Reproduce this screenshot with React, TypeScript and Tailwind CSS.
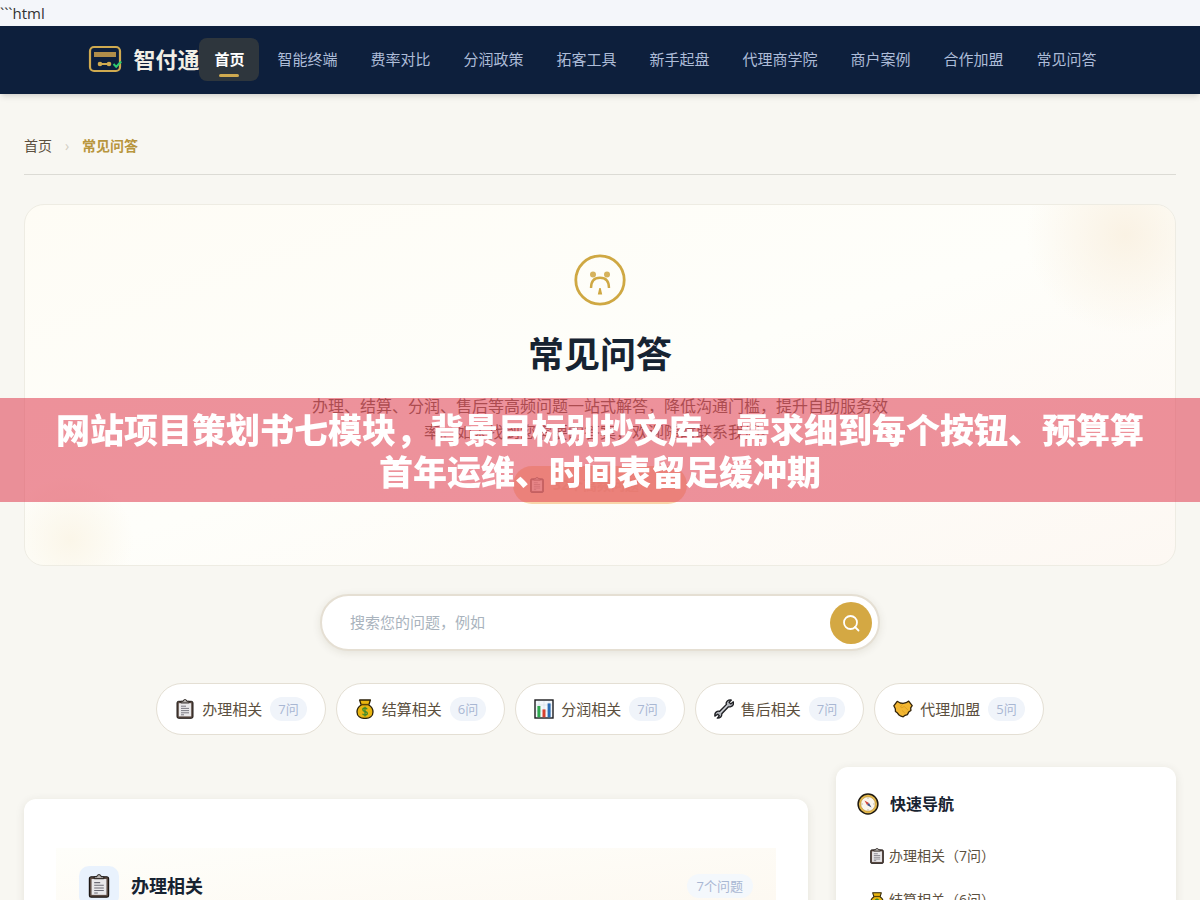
import type { ReactElement } from "react";

type IconProps = { className?: string };

function ClipboardIcon({ className }: IconProps) {
  return (
    <svg viewBox="0 0 20 20" className={className} aria-hidden="true">
      <rect x="2" y="2.3" width="16" height="17" rx="1.6" fill="#5b4a42" stroke="#1c1714" strokeWidth="1" />
      <rect x="3.8" y="4.2" width="12.4" height="13.2" fill="#e9e8ea" />
      <path d="M6 3.9V2.3h2.2a1.8 1.8 0 0 1 3.6 0H14v1.6z" fill="#b5b1ae" stroke="#1c1714" strokeWidth="0.8" />
      <path d="M6 7.2h5M6 9.4h8M6 11.6h8M6 13.8h8M6 15.8h3" stroke="#6c6b75" strokeWidth="0.9" />
    </svg>
  );
}

function MoneyIcon({ className }: IconProps) {
  return (
    <svg viewBox="0 0 20 20" className={className} aria-hidden="true">
      <path
        d="M4.6 1h10.8l-1.6 5C17 8 18 10.3 18 13c0 4-3.3 6.4-8 6.4S2 17 2 13c0-2.700 1-5 4.200-7z"
        fill="#e9b510"
        stroke="#2b2108"
        strokeWidth="1.3"
        strokeLinejoin="round"
      />
      <path d="M6 5.6h8" stroke="#5c4306" strokeWidth="1.5" />
      <path
        d="M12.2 10.2c-.5-.9-1.3-1.2-2.2-1.2-1.3 0-2.2.6-2.2 1.7 0 2.4 4.6 1.2 4.6 3.6 0 1.1-1 1.8-2.4 1.8-1.1 0-2-.4-2.5-1.3M10 7.8v9.6"
        fill="none"
        stroke="#3f8a2c"
        strokeWidth="1.3"
      />
    </svg>
  );
}

function ChartIcon({ className }: IconProps) {
  return (
    <svg viewBox="0 0 20 20" className={className} aria-hidden="true">
      <rect x="1" y="1" width="18" height="18" fill="#f3f7fb" stroke="#1b1b1f" strokeWidth="1.4" />
      <path d="M5 2v16M10 2v16M15 2v16M2 6h16M2 12h16" stroke="#d5dde6" strokeWidth="0.6" />
      <rect x="3.4" y="7" width="3" height="11.3" fill="#2fa84f" />
      <rect x="8.5" y="10.4" width="3" height="7.9" fill="#d8402f" />
      <rect x="13.6" y="4.4" width="3" height="13.9" fill="#2b6cb5" />
    </svg>
  );
}

function WrenchIcon({ className }: IconProps) {
  return (
    <svg viewBox="0 0 20 20" className={className} aria-hidden="true">
      <path
        d="M12.4 3.2C13.4 1.3 15.800.5 17.400 1l-2.300 2.300 1.600 1.600L19.300 2.800c.5 2.200-.6 4.300-2.400 4.900-.9.3-1.700.3-2.400.1l-6.700 6.900c.3 2.500-1.600 4.600-4.500 4.500l2-2.400-1.600-1.600-2.800 1.900c-.3-2.200.6-4 2.300-4.700.8-.3 1.700-.4 2.500-.1l6.700-6.900c-.3-.7-.3-1.500 0-2.200z"
        fill="#b4b7bd"
        stroke="#1d1e22"
        strokeWidth="1.3"
        strokeLinejoin="round"
      />
      <path d="m6.500 13.500 7-7" stroke="#dcdee2" strokeWidth="0.8" />
    </svg>
  );
}

function HandshakeIcon({ className }: IconProps) {
  return (
    <svg viewBox="0 0 20 20" className={className} aria-hidden="true">
      <path
        d="M.8 6.800 4.200 2.300l3 1.700 2.900.4L13 3.700l2.700-1.600 3.500 4.500-1.500 2.200.2 2.600-2.200 1.700-1.300 2.500-2.300.7-1.900 1.500-2.200-.6-2-1.200-1.500-1.900-2-1.500-.2-2.800z"
        fill="#f2b632"
        stroke="#33240a"
        strokeWidth="1.3"
        strokeLinejoin="round"
      />
      <path d="M9.800 5 7.400 8l1.500.8 2.300-1.400 4 3.800M9 11.400l2.800 2.600" fill="none" stroke="#d99a1b" strokeWidth="0.7" />
    </svg>
  );
}

function CompassIcon({ className }: IconProps) {
  return (
    <svg viewBox="0 0 22 22" className={className} aria-hidden="true">
      <circle cx="11" cy="11" r="9.9" fill="#e3b84c" stroke="#1f1a12" strokeWidth="1.5" />
      <circle cx="11" cy="11" r="7.3" fill="#faf6ee" stroke="#b88a2c" strokeWidth="0.6" />
      <path d="M11 4.4v1.4M11 16.2v1.4M4.4 11h1.4M16.2 11h1.4" stroke="#b3a98f" strokeWidth="0.9" />
      <path d="m7.500 7.500 4.500 2.500-2 2z" fill="#d3403a" />
      <path d="m14.500 14.500-4.500-2.500 2-2z" fill="#3d4f86" />
    </svg>
  );
}

function LogoIcon({ className }: IconProps) {
  return (
    <svg viewBox="0 0 34 28" fill="none" className={className} aria-hidden="true">
      <rect x="2" y="2" width="30" height="24" rx="4" stroke="#cfaa50" strokeWidth="2.2" />
      <rect x="6" y="7" width="22" height="5" fill="#b08d4a" />
      <path d="M12 19h9" stroke="#cfaa50" strokeWidth="2" />
      <circle cx="12" cy="19" r="2.3" fill="#cfaa50" />
      <circle cx="21" cy="19" r="2.3" fill="#cfaa50" />
      <path d="m25.5 19 2.700 2.700 5-5.200" stroke="#2ecc71" strokeWidth="2" />
    </svg>
  );
}

function FaceIcon({ className }: IconProps) {
  return (
    <svg viewBox="0 0 52 52" fill="none" className={className} aria-hidden="true">
      <circle cx="26" cy="26" r="24.2" stroke="#cfa843" strokeWidth="2.8" />
      <circle cx="19" cy="20.600" r="3" fill="#d6b25c" />
      <circle cx="33" cy="20.600" r="3" fill="#d6b25c" />
      <path d="M17 34c0-7 3.500-10.300 9-10.300s9 3.300 9 10.300" stroke="#cfa843" strokeWidth="2.4" />
      <path d="M25.300 34h1.400l1.500 6.600h-4.400z" fill="#cfa843" />
    </svg>
  );
}

const navItems = [
  "首页",
  "智能终端",
  "费率对比",
  "分润政策",
  "拓客工具",
  "新手起盘",
  "代理商学院",
  "商户案例",
  "合作加盟",
  "常见问答",
];

const categories: { name: string; count: number; Icon: (props: IconProps) => ReactElement }[] = [
  { name: "办理相关", count: 7, Icon: ClipboardIcon },
  { name: "结算相关", count: 6, Icon: MoneyIcon },
  { name: "分润相关", count: 7, Icon: ChartIcon },
  { name: "售后相关", count: 7, Icon: WrenchIcon },
  { name: "代理加盟", count: 5, Icon: HandshakeIcon },
];

export default function App() {
  return (
    <div className="h-screen overflow-hidden bg-[#f8f7f2] font-['Open_Sans','Noto_Sans_CJK_SC',sans-serif] text-[#5c5040]">
      <div className="h-[26px] bg-[#f4f6fa] text-[15px] leading-[26px] text-[#333]">```html</div>

      <header className="relative flex h-[68px] items-center justify-center bg-[#0d1f3c] pb-0.5 shadow-md">
        <a href="#" className="flex shrink-0 items-center gap-[11px] text-[22px] font-bold text-[#f1eee5]">
          <LogoIcon className="h-7 w-[34px]" />
          智付通
        </a>
        <nav className="flex shrink-0 gap-[3px]">
          {navItems.map((item, index) => (
            <a
              key={item}
              href="#"
              className={
                index === 0
                  ? "relative rounded-lg bg-[#2e363d] px-[15px] text-[15px] leading-[43px] font-bold text-white"
                  : "px-[15px] text-[15px] leading-[43px] text-[#adbcd8]"
              }
            >
              {item}
              {index === 0 && (
                <span className="absolute bottom-1 left-1/2 h-[3px] w-5 -translate-x-1/2 rounded-full bg-[#cfaa50]" />
              )}
            </a>
          ))}
        </nav>
      </header>

      <main className="px-6 pt-6">
        <div className="flex h-[57px] items-center border-b border-[#dcdbd5] text-sm">
          <a href="#">首页</a>
          <span className="w-[30px] text-center text-[#d3cec2]">›</span>
          <span className="font-bold text-[#b8963e]">常见问答</span>
        </div>

        {/* Hero */}
        <section className="relative mt-[29px] flex flex-col items-center overflow-hidden rounded-[20px] border border-[#eeece3] bg-linear-to-br from-[#fefcf5] via-[#fefefa] to-[#fdf8f3] pt-[49px] pb-[61px] text-center">
          <div className="absolute -top-[70px] -right-[50px] size-[200px] rounded-full bg-[radial-gradient(circle,#faf2e4_0%,transparent_70%)]" />
          <div className="absolute -bottom-[50px] -left-[30px] size-[150px] rounded-full bg-[radial-gradient(circle,#fbf6e9_0%,transparent_60%)]" />
          <FaceIcon className="size-[52px]" />
          <h1 className="mt-[25px] text-4xl leading-[48px] font-bold text-[#172331]">常见问答</h1>
          <p className="mt-3.5 max-w-[580px] text-base leading-[26px]">
            办理、结算、分润、售后等高频问题一站式解答，降低沟通门槛，提升自助服务效率。如未找到您需要的答案，欢迎随时联系我们。
          </p>
          <span className="mt-[21px] flex h-[38px] w-[174px] items-center gap-2 rounded-full bg-[#f9d5a9] px-4 text-sm font-bold text-[#f0c796]">
            <ClipboardIcon className="size-4 opacity-50" />
            32个高频问题
          </span>
        </section>

        <form className="mx-auto mt-7 flex h-[57px] w-full max-w-[560px] items-center rounded-full border-2 border-[#e5dfd3] bg-white pr-1.5 pl-7 shadow-[0_2px_8px_rgba(60,50,20,0.1)]">
          <input
            type="text"
            aria-label="搜索您的问题"
            placeholder="搜索您的问题，例如"
            className="min-w-0 flex-1 text-[15px] outline-none placeholder:text-[#a9b3bd]"
          />
          <button
            type="button"
            aria-label="搜索"
            className="flex size-[42px] items-center justify-center rounded-full bg-[#d4a843] text-white"
          >
            <svg viewBox="0 0 18 18" fill="none" stroke="currentColor" strokeWidth="1.8" className="size-[18px]">
              <circle cx="8.5" cy="8.5" r="6.5" />
              <path d="m13 13 3.500 3.500" strokeLinecap="round" />
            </svg>
          </button>
        </form>

        <div className="mt-8 flex flex-wrap justify-center gap-2.5">
          {categories.map(({ name, count, Icon }) => (
            <button
              key={name}
              type="button"
              className="flex h-[52px] items-center rounded-full border border-[#e4dfd4] bg-white px-[18px] text-[15px]"
            >
              <Icon className="mr-[7px] size-5" />
              {name}
              <span className="ml-2 rounded-full bg-[#f0f4fa] px-2 text-[13px] leading-6 text-[#a9b7d3]">{count}问</span>
            </button>
          ))}
        </div>

        <div className="mt-8 flex items-start gap-7">
          <section className="mt-8 min-w-0 flex-1 rounded-xl bg-white px-8 pt-[49px] pb-12 shadow-[0_2px_10px_rgba(60,50,20,0.1)]">
            <div className="flex items-center bg-linear-to-br from-[#fefefa] to-[#fdf8f0] px-[23px] py-[18px]">
              <span className="flex size-10 items-center justify-center rounded-[10px] bg-[#e9f2fd]">
                <ClipboardIcon className="size-6" />
              </span>
              <h2 className="ml-3 flex-1 text-lg font-bold text-[#172331]">办理相关</h2>
              <span className="rounded-full bg-[#f4f8fc] px-2.5 text-[13px] leading-6 text-[#a9b7d3]">7个问题</span>
            </div>
          </section>

          <aside className="w-[340px] shrink-0 rounded-xl bg-white px-[21px] pt-[25px] pb-6 shadow-[0_2px_10px_rgba(60,50,20,0.1)]">
            <h2 className="flex items-center gap-[11px] text-base font-bold text-[#172331]">
              <CompassIcon className="size-[22px]" />
              快速导航
            </h2>
            <nav className="mt-[18px]">
              {categories.map(({ name, count, Icon }) => (
                <a key={name} href="#" className="flex h-11 items-center gap-1 px-3 text-sm">
                  <Icon className="size-4" />
                  {name}（{count}问）
                </a>
              ))}
            </nav>
          </aside>
        </div>
      </main>

      <div className="fixed inset-x-0 top-1/2 -translate-y-1/2 bg-[#e1495c]/60 px-10 py-2.5 text-center font-['Noto_Sans_CJK_SC',sans-serif] text-[34px] leading-[42px] font-black text-white">
        网站项目策划书七模块，背景目标别抄文库、需求细到每个按钮、预算算首年运维、时间表留足缓冲期
      </div>
    </div>
  );
}
